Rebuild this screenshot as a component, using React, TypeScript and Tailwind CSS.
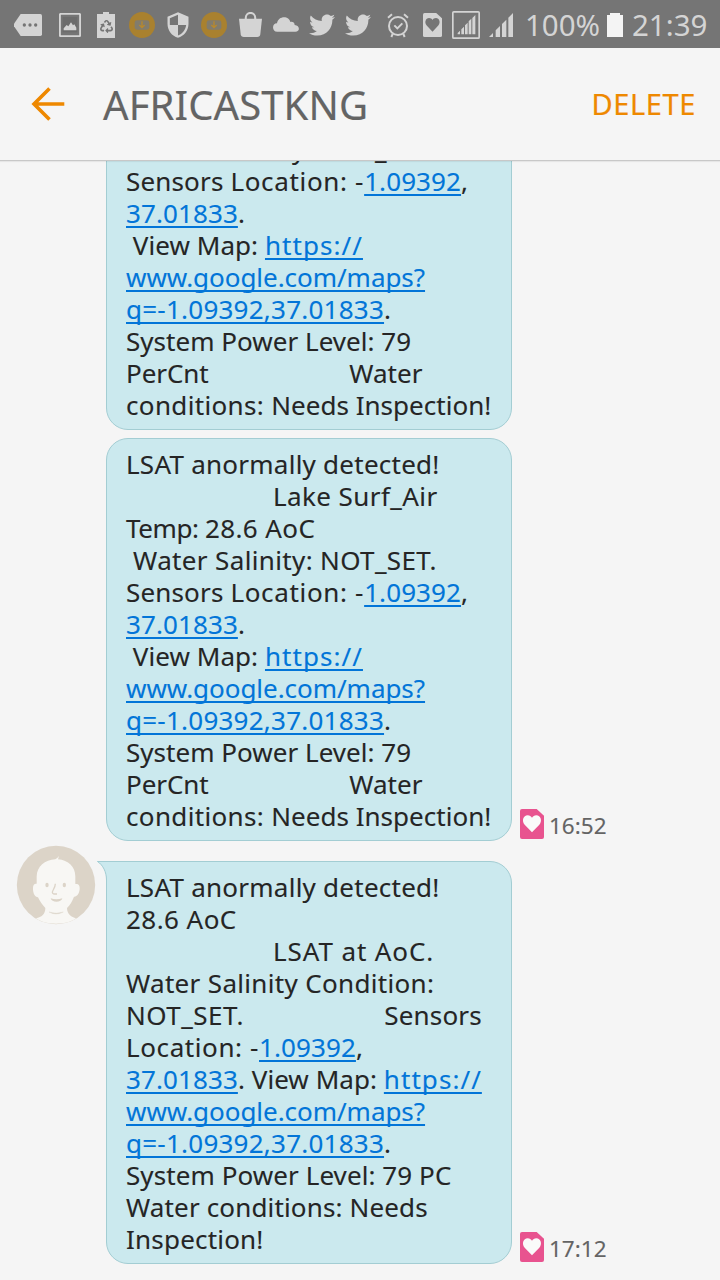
import type { ReactNode } from "react";
import { FaRecycle, FaTwitter } from "react-icons/fa";
import { MdSecurity } from "react-icons/md";

type Piece = { text: string; track?: string; link?: boolean };
type Line = Piece[];

const lsat: Line = [{ text: "LSAT anormally detected!", track: "tracking-[0.25px]" }];
const indent: Piece = { text: " ".repeat(21), track: "tracking-[0.24px]" };
const latitude: Piece = { text: "1.09392", track: "tracking-[0.1px]", link: true };
const longitude: Piece = { text: "37.01833", track: "tracking-[0.1px]", link: true };
const scheme: Piece = { text: "https://", track: "tracking-[1.05px]", link: true };
const mapUrl: Line = [{ text: "www.google.com/maps?", track: "tracking-[-0.04px]", link: true }];
const mapQuery: Line = [{ text: "q=-1.09392,37.01833", track: "tracking-[0.24px]", link: true }, { text: "." }];

const waterReport: Line[] = [
  lsat,
  [indent, { text: "Lake Surf_Air", track: "tracking-[0.42px]" }],
  [{ text: "Temp: ", track: "tracking-[-0.4px]" }, { text: "28.6 AoC", track: "tracking-[0.4px]" }],
  [{ text: " Water Salinity: NOT_SET.", track: "tracking-[0.36px]" }],
  [{ text: "Sensors ", track: "tracking-[0.16px]" }, { text: "Location: -", track: "tracking-[0.66px]" }, latitude, { text: "," }],
  [longitude, { text: "." }],
  [{ text: " View Map: ", track: "tracking-[0.06px]" }, scheme],
  mapUrl,
  mapQuery,
  [{ text: "System Power Level: 79", track: "tracking-[0.03px]" }],
  [{ text: "PerCnt" + " ".repeat(21), track: "tracking-[-0.06px]" }, { text: "Water" }],
  [{ text: "conditions: ", track: "tracking-[0.35px]" }, { text: "Needs Inspection!", track: "tracking-[0.02px]" }],
];

const salinityReport: Line[] = [
  lsat,
  [{ text: "28.6 AoC", track: "tracking-[0.45px]" }],
  [indent, { text: "LSAT at AoC.", track: "tracking-[0.9px]" }],
  [{ text: "Water Salinity Condition:", track: "tracking-[0.33px]" }],
  [{ text: "NOT_SET.", track: "tracking-[0.5px]" }, { text: " ".repeat(21), track: "tracking-[-0.08px]" }, { text: "Sensors", track: "tracking-[0.2px]" }],
  [{ text: "Location: -", track: "tracking-[0.6px]" }, latitude, { text: "," }],
  [longitude, { text: ". View Map: ", track: "tracking-[0.06px]" }, scheme],
  mapUrl,
  mapQuery,
  [{ text: "System Power Level: 79 PC", track: "tracking-[0.08px]" }],
  [{ text: "Water conditions: Needs", track: "tracking-[0.15px]" }],
  [{ text: "Inspection!", track: "tracking-[0.2px]" }],
];

function Bubble({ lines, tail = false }: { lines: Line[]; tail?: boolean }) {
  return (
    <div
      className={`relative w-[406px] shrink-0 border border-[#a3cdd3] bg-[#cbe9ee] pt-[9px] pr-2 pb-2 pl-[19px] text-[26px] leading-8 text-[#252525] [-webkit-text-stroke:0.1px] ${
        tail ? "rounded-[22px] rounded-tl-none" : "rounded-[22px]"
      }`}
    >
      {tail && (
        <svg className="absolute -top-px -left-[10px]" width="12" height="23" viewBox="0 0 12 23">
          <path d="M0 0H12V23H9.5V19C9.5 11 6 4 0 0.5Z" fill="#cbe9ee" />
          <path d="M12 0.5H0.5C6 4 9.5 11 9.5 19V23" fill="none" stroke="#a3cdd3" />
        </svg>
      )}
      {lines.map((line, i) => (
        <div key={i} className="h-8 whitespace-pre">
          {line.map((p, j) =>
            p.link ? (
              <a
                key={j}
                className={`text-[#0275d8] underline decoration-[1.5px] underline-offset-[3px] [text-decoration-skip-ink:none] ${p.track ?? ""}`}
              >
                {p.text}
              </a>
            ) : (
              <span key={j} className={p.track}>
                {p.text}
              </span>
            ),
          )}
        </div>
      ))}
    </div>
  );
}

function HeartCard({ className, heart }: { className: string; heart: string }) {
  return (
    <svg className={className} viewBox="0 0 72 90" preserveAspectRatio="none">
      <path d="M6 0H50L72 20V84Q72 90 66 90H6Q0 90 0 84V6Q0 0 6 0Z" fill="currentColor" />
      <path d="M36 70L14 47C4 36 10 19 23 19C29 19 33 22 36 26C39 22 43 19 49 19C62 19 68 36 58 47Z" fill={heart} />
    </svg>
  );
}

function Stamp({ time }: { time: string }) {
  return (
    <div className="ml-2 flex items-end self-end">
      <HeartCard className="mb-[2px] h-[30px] w-6 text-[#e8538f]" heart="#fafafa" />
      <span className="mb-[3px] ml-[5px] text-[22.5px] leading-6 text-[#646464] [-webkit-text-stroke:0.1px]">{time}</span>
    </div>
  );
}

function Avatar() {
  return (
    <svg className="mr-[10px] ml-4 size-20 shrink-0" viewBox="48 30 240 240">
      <circle cx="168" cy="150" r="117.5" fill="#dcd4c8" />
      <path
        d="M110 145V125C110 95 135 74 166 73Q170 72 177 63L174 73C205 76 226 95 226 125V147C236 145 240 152 239 163C237 178 230 186 222 185C216 200 210 210 201 219C201 238 215 246 228 250C212 262 190 266 168 266C146 266 125 262 108 250C125 246 136 238 136 219C127 210 120 200 114 187C105 186 99 175 99 162C98 150 103 145 110 146Z"
        fill="#f8f7f4"
      />
      <ellipse cx="141" cy="150" rx="5" ry="7" fill="#dcd4c8" />
      <ellipse cx="193" cy="150" rx="5" ry="7" fill="#dcd4c8" />
      <path d="M166 146C166 158 157 166 157 172C157 178 164 177 171 177" fill="none" stroke="#dcd4c8" strokeWidth="4" />
      <path d="M152 190Q169 196 187 190C185 204 154 204 152 190Z" fill="#dcd4c8" />
      <path d="M147 231Q168 238 190 231Q168 243 147 231Z" fill="#dcd4c8" stroke="#dcd4c8" />
    </svg>
  );
}

function Cell({ className, children }: { className: string; children: ReactNode }) {
  return <div className={`flex h-12 shrink-0 items-center justify-center ${className}`}>{children}</div>;
}

function DownloadBadge() {
  return (
    <svg width="26" height="26" viewBox="0 0 78 78">
      <circle cx="39" cy="39" r="39" fill="#a9812f" />
      <rect x="17" y="25" width="44" height="28" rx="7" fill="#827c6c" />
      <path d="M39 28V46M31 39L39 47L47 39" fill="none" stroke="#b8892c" strokeWidth="4" />
    </svg>
  );
}

function StatusBar() {
  return (
    <div className="flex h-12 shrink-0 items-center bg-[#757575] pl-3 text-[#d4d4d4]">
      <Cell className="w-8 pt-[2px]">
        <svg width="28" height="22" viewBox="0 0 84 66">
          <path d="M20 0H79Q84 0 84 5V61Q84 66 79 66H20L0 37V29Z" fill="currentColor" />
          <g fill="#757575">
            <circle cx="31" cy="33" r="5" />
            <circle cx="48" cy="33" r="5" />
            <circle cx="65" cy="33" r="5" />
          </g>
        </svg>
      </Cell>
      <Cell className="ml-[8px] w-9 pt-[2px]">
        <svg width="22" height="24" viewBox="0 0 66 72">
          <rect x="2.5" y="2.5" width="61" height="67" rx="4" fill="none" stroke="currentColor" strokeWidth="6" />
          <rect x="11" y="12" width="44" height="46" fill="#6c6c6c" />
          <path d="M14 52V46L23 36L28 40L36 28L42 37L46 34L52 44V52Z" fill="currentColor" />
        </svg>
      </Cell>
      <Cell className="w-9 pt-[2px]">
        <div className="flex h-[26px] w-[18px] flex-col items-center">
          <div className="h-[2px] w-[6px] bg-[#d4d4d4]" />
          <div className="flex h-6 w-[18px] items-center justify-center bg-[#d4d4d4] text-[#757575]">
            <FaRecycle size={13} />
          </div>
        </div>
      </Cell>
      <Cell className="w-9 pt-[2px]">
        <DownloadBadge />
      </Cell>
      <Cell className="w-9 pt-[2px]">
        <MdSecurity size={28} />
      </Cell>
      <Cell className="w-9 pt-[2px]">
        <DownloadBadge />
      </Cell>
      <Cell className="w-9 pt-px">
        <svg width="23" height="25" viewBox="0 0 68 74">
          <path d="M20 24V17C20 -2 48 -2 48 17V24" fill="none" stroke="currentColor" strokeWidth="6" />
          <path d="M0 20H68L63 66Q62 74 54 74H14Q6 74 5 66Z" fill="currentColor" />
        </svg>
      </Cell>
      <Cell className="w-9">
        <svg width="26" height="15" viewBox="0 0 78 43">
          <path d="M13 43C-4 43 -4 18 12 18C15 -6 49 -6 52 14C58 12 65 16 65 23C82 25 81 43 67 43Z" fill="currentColor" />
        </svg>
      </Cell>
      <Cell className="w-9 pt-[2px]">
        <FaTwitter size={26} />
      </Cell>
      <Cell className="w-9 pt-[2px]">
        <FaTwitter size={26} />
      </Cell>
      <Cell className="ml-[4px] w-9 pt-[2px]">
        <svg width="22" height="25" viewBox="0 0 66 75">
          <circle cx="33" cy="39" r="27" fill="none" stroke="currentColor" strokeWidth="6" />
          <path d="M22 37L31 46L46 31" fill="none" stroke="currentColor" strokeWidth="6" />
          <path d="M3 14L15 4M51 4L63 14M17 63L13 72M49 63L53 72" fill="none" stroke="currentColor" strokeWidth="6" />
        </svg>
      </Cell>
      <Cell className="w-8 pt-[2px]">
        <HeartCard className="h-6 w-[19px]" heart="#757575" />
      </Cell>
      <Cell className="w-9 pt-[2px]">
        <svg width="28" height="28" viewBox="0 0 84 84">
          <rect x="2.5" y="2.5" width="79" height="79" rx="3" fill="none" stroke="currentColor" strokeWidth="5" />
          <path d="M17 70V66L24 59V70ZM28 70V55L36 47V70ZM39 70V43L47 35V70ZM50 70V31L58 23V70ZM61 70V21L70 12V70Z" fill="currentColor" />
        </svg>
      </Cell>
      <Cell className="w-[34px] pt-[2px]">
        <svg width="24" height="24" viewBox="0 0 72 72">
          <path d="M0 72L12 60V72ZM20 72V52L33 39V72ZM39 72V33L52 20V72ZM58 72V14L72 0V72Z" fill="currentColor" />
        </svg>
      </Cell>
      <span className="ml-[7px] w-20 shrink-0 pt-[2px] text-[29.5px] leading-[30px] whitespace-nowrap">100%</span>
      <div className="mt-[2px] ml-[2px] flex h-6 w-4 shrink-0 flex-col items-center">
        <div className="h-[2px] w-[10px] bg-[#f4f4f4]" />
        <div className="h-[22px] w-4 bg-[#f4f4f4]" />
      </div>
      <span className="ml-[9px] pt-[2px] text-[29.5px] leading-[30px]">21:39</span>
    </div>
  );
}

export default function App() {
  return (
    <div className="flex h-[1280px] w-[720px] flex-col overflow-hidden bg-[#f5f5f5] font-['Noto_Sans',sans-serif]">
      <StatusBar />
      <header className="z-10 flex h-[113px] shrink-0 items-center border-b border-[#c8c8c8] bg-[#f5f5f5] pr-6 pl-[31px] shadow-[0_1px_1px_rgba(0,0,0,0.06)]">
        <svg width="34" height="34" viewBox="0 0 34 34" fill="none" stroke="#ee8800" strokeWidth="3.6">
          <path d="M33.3 17H3M18.5 1.5L3 17L18.5 32.5" />
        </svg>
        <h1 className="ml-[38px] pt-[2px] text-[40px] leading-10 tracking-[0.1px] text-[#646464] [-webkit-text-stroke:0.15px]">AFRICASTKNG</h1>
        <button className="ml-auto text-[29px] leading-[30px] tracking-[0.6px] text-[#ee8800] [-webkit-text-stroke:0.2px]">DELETE</button>
      </header>
      <main className="min-h-0 flex-1 overflow-hidden">
        <div className="-mt-[38px] flex flex-col">
          <div className="ml-[106px] flex">
            <Bubble lines={waterReport.slice(3)} />
          </div>
          <div className="mt-2 ml-[106px] flex">
            <Bubble lines={waterReport} />
            <Stamp time="16:52" />
          </div>
          <div className="mt-1 flex items-start">
            <Avatar />
            <div className="mt-4 flex">
              <Bubble lines={salinityReport} tail />
              <Stamp time="17:12" />
            </div>
          </div>
        </div>
      </main>
    </div>
  );
}
